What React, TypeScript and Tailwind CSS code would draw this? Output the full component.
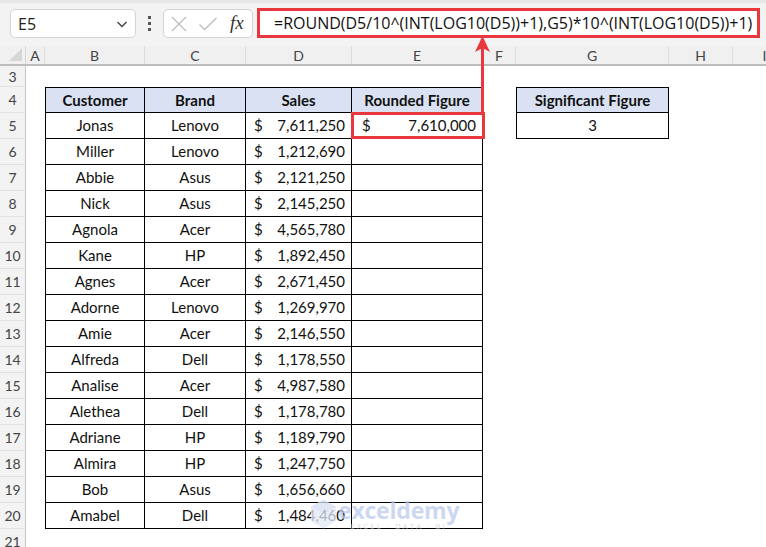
import React from 'react';

const COLS = [
  { key: 'A', w: 19 },
  { key: 'B', w: 100 },
  { key: 'C', w: 101 },
  { key: 'D', w: 106 },
  { key: 'E', w: 131 },
  { key: 'F', w: 33 },
  { key: 'G', w: 153 },
  { key: 'H', w: 64 },
  { key: 'I', w: 64 },
];

const ROWS: [string, string, string][] = [
  ['Jonas', 'Lenovo', '7,611,250'],
  ['Miller', 'Lenovo', '1,212,690'],
  ['Abbie', 'Asus', '2,121,250'],
  ['Nick', 'Asus', '2,145,250'],
  ['Agnola', 'Acer', '4,565,780'],
  ['Kane', 'HP', '1,892,450'],
  ['Agnes', 'Acer', '2,671,450'],
  ['Adorne', 'Lenovo', '1,269,970'],
  ['Amie', 'Acer', '2,146,550'],
  ['Alfreda', 'Dell', '1,178,550'],
  ['Analise', 'Acer', '4,987,580'],
  ['Alethea', 'Dell', '1,178,780'],
  ['Adriane', 'HP', '1,189,790'],
  ['Almira', 'HP', '1,247,750'],
  ['Bob', 'Asus', '1,656,660'],
  ['Amabel', 'Dell', '1,484,460'],
];

const cellFont = { fontFamily: 'Lato, "Open Sans", sans-serif' };

function RowHead({ n, h }: { n: number; h: string }) {
  return (
    <div
      className={`w-[26px] shrink-0 ${h} bg-[#f3f3f3] border-r border-[#c8c8c8] border-b border-b-[#e3e3e3] flex items-center justify-center text-[14px] text-[#444]`}
    >
      {n}
    </div>
  );
}

function Toolbar() {
  return (
    <div className="h-[46px] bg-[#f3f3f3] border-t-[3px] border-[#e6e6e6] flex items-start pt-[6px] relative">
      <div className="ml-[10px] w-[126px] h-[29px] bg-white border border-[#d4d4d4] rounded-[5px] flex items-center justify-between pl-[7px] pr-[6px]">
        <span className="text-[16px] text-[#222]" style={{ fontFamily: '"Open Sans", sans-serif' }}>E5</span>
        <svg width="14" height="14" viewBox="0 0 14 14" fill="none" stroke="#444" strokeWidth="1.4">
          <path d="M2.5 5l4.5 4.5L11.5 5" />
        </svg>
      </div>
      <div className="w-[27px] h-[29px] flex flex-col items-center justify-center gap-[3px]">
        <span className="w-[3px] h-[3px] bg-[#555]" />
        <span className="w-[3px] h-[3px] bg-[#555]" />
        <span className="w-[3px] h-[3px] bg-[#555]" />
      </div>
      <div className="w-[90px] h-[29px] bg-white border border-[#d4d4d4] rounded-[5px] flex items-center pl-[6px] gap-[10px]">
        <svg width="18" height="18" viewBox="0 0 18 18" fill="none" stroke="#bdbdbd" strokeWidth="1.3">
          <path d="M2 2l14 14M16 2L2 16" />
        </svg>
        <svg width="20" height="18" viewBox="0 0 20 18" fill="none" stroke="#bdbdbd" strokeWidth="1.3">
          <path d="M1.5 9.5l5 5L18.5 3" />
        </svg>
        <span className="text-[19px] italic text-[#333] ml-[2px]" style={{ fontFamily: '"Liberation Serif", serif' }}>fx</span>
      </div>
      <div className="ml-[4px] w-[503px] h-[30px] -mt-[1px] bg-white border-[3px] border-[#e8383d] flex items-center pl-[14px]">
        <span className="text-[16px] text-[#111] whitespace-nowrap" style={{ fontFamily: '"Open Sans", sans-serif' }}>
          =ROUND(D5/10^(INT(LOG10(D5))+1),G5)*10^(INT(LOG10(D5))+1)
        </span>
      </div>
    </div>
  );
}

function ColHeader() {
  return (
    <div className="flex h-[20px] bg-[#f0f0f0] border-b-2 border-[#bdbdbd]">
      <div className="w-[26px] shrink-0 border-r border-[#d8d8d8] relative">
        <svg className="absolute right-[3px] bottom-[3px]" width="13" height="13" viewBox="0 0 13 13">
          <path d="M13 0V13H0Z" fill="#d6d6d6" />
        </svg>
      </div>
      {COLS.map((c) => (
        <div
          key={c.key}
          style={{ width: c.w, ...cellFont }}
          className="shrink-0 border-r border-[#dcdcdc] flex items-center justify-center text-[14px] text-[#444]"
        >
          {c.key}
        </div>
      ))}
    </div>
  );
}

export default function App() {
  return (
    <div className="w-[766px] h-[547px] overflow-hidden bg-white relative" style={cellFont}>
      <Toolbar />
      <ColHeader />

      {/* row 3 */}
      <div className="flex">
        <RowHead n={3} h="h-[21px]" />
      </div>

      {/* header row 4 */}
      <div className="flex h-[26px]">
        <RowHead n={4} h="h-[26px]" />
        <div className="w-[19px] shrink-0" />
        <div className="w-[100px] shrink-0 bg-[#d9e1f2] border border-black flex items-center justify-center font-bold text-[15px] text-[#111]">Customer</div>
        <div className="w-[101px] shrink-0 bg-[#d9e1f2] border-y border-r border-black flex items-center justify-center font-bold text-[15px] text-[#111]">Brand</div>
        <div className="w-[106px] shrink-0 bg-[#d9e1f2] border-y border-r border-black flex items-center justify-center font-bold text-[15px] text-[#111]">Sales</div>
        <div className="w-[131px] shrink-0 bg-[#d9e1f2] border-y border-r border-black flex items-center justify-center font-bold text-[15px] text-[#111]">Rounded Figure</div>
        <div className="w-[33px] shrink-0" />
        <div className="w-[153px] shrink-0 bg-[#d9e1f2] border border-black flex items-center justify-center font-bold text-[15px] text-[#111]">Significant Figure</div>
      </div>

      {ROWS.map((r, i) => (
        <div key={i} className="flex h-[26px]">
          <RowHead n={i + 5} h="h-[26px]" />
          <div className="w-[19px] shrink-0" />
          <div className="w-[100px] shrink-0 border-x border-b border-black flex items-center justify-center text-[15px] text-[#111]">{r[0]}</div>
          <div className="w-[101px] shrink-0 border-r border-b border-black flex items-center justify-center text-[15px] text-[#111]">{r[1]}</div>
          <div className="w-[106px] shrink-0 border-r border-b border-black flex items-center justify-between pl-[8px] pr-[6px] text-[15px] text-[#111]">
            <span>$</span>
            <span>{r[2]}</span>
          </div>
          <div className="w-[131px] shrink-0 border-r border-b border-black flex items-center justify-between pl-[10px] pr-[6px] text-[15px] text-[#111]">
            {i === 0 && (
              <>
                <span>$</span>
                <span>7,610,000</span>
              </>
            )}
          </div>
          {i === 0 && (
            <>
              <div className="w-[33px] shrink-0" />
              <div className="w-[153px] shrink-0 border-x border-b border-black flex items-center justify-center text-[15px] text-[#111]">3</div>
            </>
          )}
        </div>
      ))}

      <div className="flex">
        <RowHead n={21} h="h-[26px]" />
      </div>

      {/* highlight on E5 */}
      <div className="absolute left-[351px] top-[112px] w-[134px] h-[27px] border-[3px] border-[#e8383d] pointer-events-none" />

      {/* arrow from E5 to formula bar */}
      <div className="absolute left-[481px] top-[44px] w-[3px] h-[69px] bg-[#e8383d]" />
      <svg className="absolute left-[475px] top-[36px]" width="15" height="16" viewBox="0 0 15 16">
        <path d="M7.5 0L15 16L7.5 12L0 16Z" fill="#e8383d" />
      </svg>

      {/* watermark */}
      <div className="absolute left-[311px] top-[499px] flex items-start gap-[2px] opacity-75 pointer-events-none">
        <svg width="25" height="30" viewBox="0 0 26 30">
          <path d="M13 0L26 7.5V22.5L13 30L0 22.5V7.5Z" fill="#e3e9f6" />
          <path d="M13 0L26 7.5L13 15L0 7.5Z" fill="#d5def2" />
        </svg>
        <div className="flex flex-col items-center leading-none">
          <span className="text-[23px] font-bold text-[#bccbee] tracking-[-0.2px]" style={{ fontFamily: '"Open Sans", sans-serif', lineHeight: '23px' }}>exceldemy</span>
          <span className="text-[7.5px] text-[#d2d2d2] tracking-[2.2px] mt-[1px]" style={{ fontFamily: '"Open Sans", sans-serif' }}>EXCEL · DATA · BI</span>
        </div>
      </div>
    </div>
  );
}
